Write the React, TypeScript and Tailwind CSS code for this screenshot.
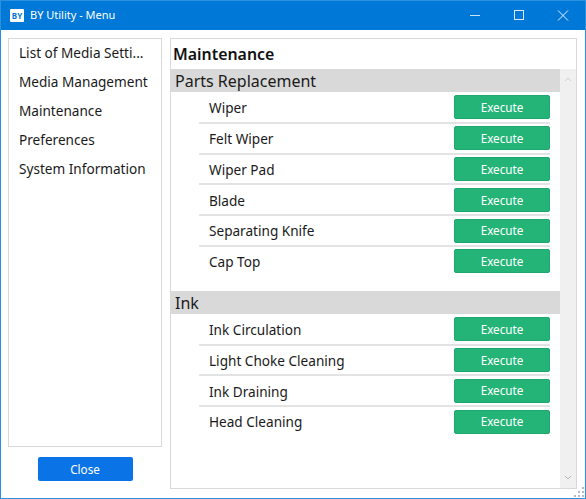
const font = { fontFamily: '"Noto Sans", "Open Sans", sans-serif' }

const parts = ['Wiper', 'Felt Wiper', 'Wiper Pad', 'Blade', 'Separating Knife', 'Cap Top']
const ink = ['Ink Circulation', 'Light Choke Cleaning', 'Ink Draining', 'Head Cleaning']
const menu = ['List of Media Setti...', 'Media Management', 'Maintenance', 'Preferences', 'System Information']

function Row({ label, last }: { label: string; last: boolean }) {
  return (
    <div className={`flex h-[30.8px] items-center justify-between ml-[28px] pl-[10px] border-b-2 ${last ? 'border-transparent' : 'border-[#e3e3e3]'}`}>
      <span className="pt-[2px] text-[13.6px] text-[#1a1a1a]">{label}</span>
      <button className="h-[24px] w-[96px] rounded-[2px] bg-[#25b478] border border-[#1fa86e] pt-[1px] text-[11.7px] text-white">
        Execute
      </button>
    </div>
  )
}

function Section({ title, items }: { title: string; items: string[] }) {
  return (
    <div>
      <div className="flex h-[23px] items-center bg-[#d9d9d9] pl-[4px] pt-[1px] text-[16px] text-[#1a1a1a]">{title}</div>
      <div className="pt-[1px] pr-[10px]">
        {items.map((item, i) => (
          <Row key={item} label={item} last={i === items.length - 1} />
        ))}
      </div>
    </div>
  )
}

export default function App() {
  return (
    <div className="flex h-[499px] w-[586px] flex-col border border-[#2b90e0] bg-white" style={font}>
      {/* Title bar */}
      <div className="flex h-[29px] shrink-0 items-center bg-[#0078d7] pl-[9px] text-white">
        <div className="flex h-[13px] w-[14px] items-center justify-center rounded-[1px] bg-white text-[8px] font-bold leading-none text-[#0078d7]">
          BY
        </div>
        <span className="ml-[6px] text-[11px]">BY Utility - Menu</span>
        <div className="ml-auto flex items-center">
          <svg width="44" height="29" viewBox="0 0 44 29">
            <path d="M17 14.5h10" stroke="white" strokeOpacity="0.8" />
          </svg>
          <svg width="44" height="29" viewBox="0 0 44 29">
            <rect x="17.5" y="9.5" width="9" height="9" fill="none" stroke="white" strokeOpacity="0.85" />
          </svg>
          <svg width="44" height="29" viewBox="0 0 44 29">
            <path d="M17 9.5l10 10M27 9.5l-10 10" stroke="white" strokeOpacity="0.9" />
          </svg>
        </div>
      </div>

      {/* Body */}
      <div className="relative flex min-h-0 flex-1 gap-[8px] pl-[7px] pr-[8px] pt-[8px] pb-[9px]">
        <div className="flex w-[154px] shrink-0 flex-col">
          <div className="h-[409px] border border-[#d9d9d9] pl-[10px]">
            {menu.map((item) => (
              <div key={item} className="flex h-[29px] items-center pb-[1px] text-[13.6px] text-[#1a1a1a]">
                {item}
              </div>
            ))}
          </div>
          <div className="flex justify-center pt-[10px]">
            <button className="h-[24px] w-[95px] rounded-[2px] bg-[#0a74e6] pt-[1px] text-[11.7px] text-white">Close</button>
          </div>
        </div>

        <div className="flex min-w-0 flex-1 border border-[#d9d9d9]">
          <div className="min-w-0 flex-1">
            <div className="flex h-[30px] items-center pl-[2px] pt-[2px] text-[15.9px] font-semibold text-[#111]">
              Maintenance
            </div>
            <Section title="Parts Replacement" items={parts} />
            <div className="h-[13px]" />
            <Section title="Ink" items={ink} />
          </div>
          {/* Scrollbar */}
          <div className="mt-[30px] flex w-[16px] shrink-0 flex-col items-center justify-between bg-[#f0f0f0] py-[8px]">
            <svg width="8" height="5" viewBox="0 0 8 5">
              <path d="M1 4l3-3 3 3" fill="none" stroke="#cfcfcf" />
            </svg>
            <svg width="8" height="5" viewBox="0 0 8 5">
              <path d="M1 1l3 3 3-3" fill="none" stroke="#b5b5b5" />
            </svg>
          </div>
        </div>

        {/* Resize grip */}
        <svg width="11" height="11" viewBox="0 0 11 11" className="absolute bottom-[0px] right-[0px]">
          <g fill="#b8b8c4">
            <rect x="8" y="0" width="2" height="2" />
            <rect x="4" y="4" width="2" height="2" />
            <rect x="8" y="4" width="2" height="2" />
            <rect x="0" y="8" width="2" height="2" />
            <rect x="4" y="8" width="2" height="2" />
            <rect x="8" y="8" width="2" height="2" />
          </g>
        </svg>
      </div>
    </div>
  )
}
